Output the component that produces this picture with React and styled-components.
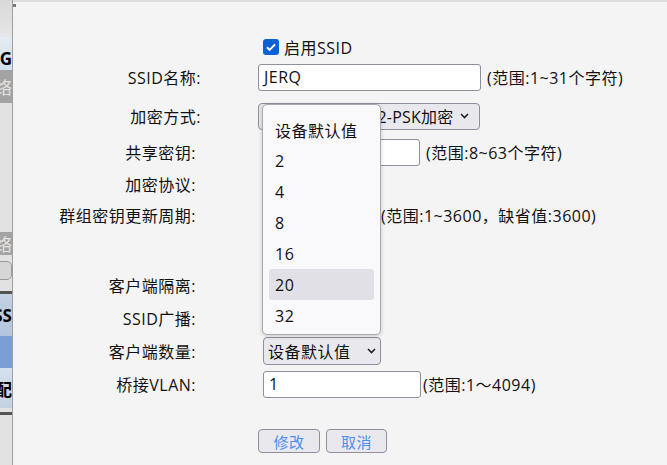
import React from 'react'
import styled, { createGlobalStyle } from 'styled-components'

const GlobalStyle = createGlobalStyle`
  html, body {
    margin: 0;
    padding: 0;
    background: #f4f4f4;
  }
  body {
    font-family: "Open Sans", "Noto Sans CJK SC", sans-serif;
    font-size: 16px;
    letter-spacing: 0.5px;
    color: #111;
  }
`

const Page = styled.div`
  display: flex;
  width: 667px;
  height: 465px;
  overflow: hidden;
`

const Sidebar = styled.div`
  width: 12px;
  flex-shrink: 0;
  display: flex;
  flex-direction: column;
  background: #e2e2e2;
  border-right: 1px solid #9e9e9e;
  overflow: hidden;
`

const SideBlock = styled.div`
  height: ${p => p.$h}px;
  flex-shrink: 0;
  display: flex;
  align-items: ${p => p.$align || 'center'};
  justify-content: flex-end;
  white-space: nowrap;
  letter-spacing: 0;
  background: ${p => p.$bg};
  color: ${p => p.$color || '#000'};
  font-weight: ${p => (p.$bold ? 700 : 400)};
  font-size: 17px;
  border-bottom: ${p => (p.$line ? `3px solid ${p.$line}` : 'none')};
`

const SideButton = styled.div`
  height: 24px;
  margin: 6px 0 6px -8px;
  border: 1px solid #9a9a9a;
  border-radius: 5px;
  background: #d6d6d6;
`

const Main = styled.div`
  position: relative;
  flex: 1;
  background: #f4f4f4;
  border-top: 2px solid #dcdcdc;
`

const Corner = styled.div`
  position: absolute;
  left: 0;
  top: 2px;
  width: 3px;
  height: 3px;
  background: #777;
`

const Form = styled.div`
  display: flex;
  flex-direction: column;
  padding-top: 31px;
`

const Row = styled.div`
  display: grid;
  grid-template-columns: 188px 1fr;
  align-items: center;
  height: 28px;
  margin-top: ${p => p.$space || 0}px;
`

const Label = styled.div`
  text-align: right;
  white-space: nowrap;
  padding-right: ${p => p.$pr || 0}px;
`

const Cell = styled.div`
  display: flex;
  align-items: center;
  gap: ${p => p.$gap ?? 6}px;
  padding-left: ${p => p.$indent}px;
  white-space: nowrap;
`

const Input = styled.div`
  box-sizing: border-box;
  width: ${p => p.$w}px;
  height: 27px;
  padding-left: 5px;
  display: flex;
  align-items: center;
  background: #fff;
  border: 1px solid #8f8f9d;
  border-radius: 3px;
`

const Hint = styled.span`
  color: #111;
`

const Select = styled.div`
  box-sizing: border-box;
  width: ${p => p.$w}px;
  height: ${p => p.$h || 28}px;
  display: flex;
  align-items: center;
  gap: 6px;
  padding: 0 ${p => p.$pr || 10}px 0 ${p => p.$pl || 8}px;
  background: #e9e9ed;
  border: 1px solid #8f8f9d;
  border-radius: 4px;
  white-space: nowrap;
  overflow: hidden;

  svg {
    flex-shrink: 0;
  }
`

const SelectText = styled.span`
  flex: 1;
  min-width: 0;
  overflow: hidden;
  letter-spacing: ${p => p.$ls ?? 0.5}px;
`

const Check = styled.span`
  width: 16px;
  height: 16px;
  border-radius: 3px;
  background: #0b62d6;
  display: inline-flex;
  align-items: center;
  justify-content: center;
`

const Button = styled.div`
  box-sizing: border-box;
  width: ${p => p.$w}px;
  height: 24px;
  display: flex;
  align-items: center;
  justify-content: center;
  background: #e9e9ed;
  border: 1px solid #8f8f9d;
  border-radius: 4px;
  color: #4c8ef5;
  font-size: 15px;
`

const Popup = styled.div`
  position: absolute;
  left: 249px;
  top: 102px;
  box-sizing: border-box;
  width: 119px;
  height: 231px;
  padding: 9px 6px 5px;
  background: #f9f9fb;
  border: 1px solid #a9a9b4;
  border-radius: 5px;
  box-shadow: 0 1px 4px rgba(0, 0, 0, 0.18);
`

const Option = styled.div`
  height: 31px;
  display: flex;
  align-items: center;
  padding-left: 6px;
  border-radius: 3px;
  background: ${p => (p.$active ? '#e0e0e6' : 'transparent')};
`

const Chevron = () => (
  <svg width="9" height="6" viewBox="0 0 9 6">
    <path d="M1 1l3.5 3.5L8 1" fill="none" stroke="#222" strokeWidth="1.6" />
  </svg>
)

const CheckMark = () => (
  <svg width="12" height="12" viewBox="0 0 12 12">
    <path d="M2 6.3l2.6 2.6L10 3.4" fill="none" stroke="#fff" strokeWidth="2" />
  </svg>
)

const options = ['设备默认值', '2', '4', '8', '16', '20', '32']

export default function App() {
  return (
    <Page>
      <GlobalStyle />
      <Sidebar>
        <SideBlock $h={37} $bg="linear-gradient(#d9d9d9, #e6e6e6)" />
        <SideBlock $h={33} $bg="linear-gradient(#e4ebf3, #d3dfec)" $bold $align="flex-end">
          WLAN配置G
        </SideBlock>
        <SideBlock $h={33} $bg="#a3a3a3" $color="#e4e4e4">
          无线网络
        </SideBlock>
        <SideBlock $h={129} $bg="#e2e2e2" />
        <SideBlock $h={23} $bg="#a3a3a3" $color="#e4e4e4">
          有线网络
        </SideBlock>
        <SideButton />
        <SideBlock $h={5} $bg="#e2e2e2" $line="#555" />
        <SideBlock $h={42} $bg="linear-gradient(#c3d2e4, #b3c5dc)" $bold>
          SSID SS
        </SideBlock>
        <SideBlock $h={32} $bg="#7b9fd4" />
        <SideBlock $h={40} $bg="linear-gradient(#d6e0ec, #c3d1e2)" $bold>
          射频配
        </SideBlock>
        <SideBlock $h={4} $bg="#e2e2e2" $line="#555" />
        <SideBlock $h={50} $bg="#e2e2e2" />
      </Sidebar>

      <Main>
        <Corner />
        <Form>
          <Row>
            <Label />
            <Cell $indent={62} $gap={5}>
              <Check>
                <CheckMark />
              </Check>
              <span>启用SSID</span>
            </Cell>
          </Row>
          <Row $space={2}>
            <Label>SSID名称:</Label>
            <Cell $indent={57}>
              <Input $w={223}>JERQ</Input>
              <Hint>(范围:1~31个字符)</Hint>
            </Cell>
          </Row>
          <Row $space={11}>
            <Label>加密方式:</Label>
            <Cell $indent={57}>
              <Select $w={222} $h={27}>
                <SelectText $ls={0.2}>WPA-PSK/WPA2-PSK加密</SelectText>
                <Chevron />
              </Select>
            </Cell>
          </Row>
          <Row $space={8}>
            <Label $pr={5}>共享密钥:</Label>
            <Cell $indent={62}>
              <Input $w={157} />
              <Hint>(范围:8~63个字符)</Hint>
            </Cell>
          </Row>
          <Row $space={4}>
            <Label $pr={5}>加密协议:</Label>
            <Cell $indent={62}>
              <Select $w={80}>
                <SelectText />
                <Chevron />
              </Select>
            </Cell>
          </Row>
          <Row $space={3}>
            <Label $pr={5}>群组密钥更新周期:</Label>
            <Cell $indent={62} $gap={3}>
              <Input $w={115} />
              <Hint>(范围:1~3600，缺省值:3600)</Hint>
            </Cell>
          </Row>
          <Row $space={7}>
            <Label />
            <Cell $indent={62} />
          </Row>
          <Row $space={7}>
            <Label $pr={5}>客户端隔离:</Label>
            <Cell $indent={62}>
              <Select $w={80}>
                <SelectText />
                <Chevron />
              </Select>
            </Cell>
          </Row>
          <Row $space={5}>
            <Label $pr={5}>SSID广播:</Label>
            <Cell $indent={62}>
              <Select $w={80}>
                <SelectText />
                <Chevron />
              </Select>
            </Cell>
          </Row>
          <Row $space={5}>
            <Label $pr={5}>客户端数量:</Label>
            <Cell $indent={62}>
              <Select $w={118} $pl={4} $pr={4}>
                <SelectText>设备默认值</SelectText>
                <Chevron />
              </Select>
            </Cell>
          </Row>
          <Row $space={5}>
            <Label $pr={5}>桥接VLAN:</Label>
            <Cell $indent={62} $gap={2}>
              <Input $w={158}>1</Input>
              <Hint>(范围:1～4094)</Hint>
            </Cell>
          </Row>
          <Row $space={29}>
            <Label />
            <Cell $indent={57}>
              <Button $w={62}>修改</Button>
              <Button $w={61}>取消</Button>
            </Cell>
          </Row>
        </Form>

        <Popup>
          {options.map(o => (
            <Option key={o} $active={o === '20'}>
              {o}
            </Option>
          ))}
        </Popup>
      </Main>
    </Page>
  )
}
